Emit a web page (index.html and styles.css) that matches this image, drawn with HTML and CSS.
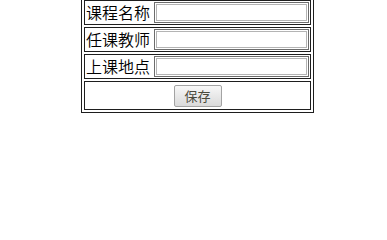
FILE: index.html
```html
<!DOCTYPE html>
<html lang="zh-CN">
<head>
<meta charset="utf-8">
<title>课程</title>
<link rel="stylesheet" href="styles.css">
</head>
<body>
<table class="form">
  <tr><td><div class="row"><span class="label">课程名称</span><input class="field" type="text"></div></td></tr>
  <tr><td><div class="row"><span class="label">任课教师</span><input class="field" type="text"></div></td></tr>
  <tr><td><div class="row"><span class="label">上课地点</span><input class="field" type="text"></div></td></tr>
  <tr><td class="actions"><button class="save" type="button">保存</button></td></tr>
</table>
</body>
</html>
```

FILE: styles.css
```css
body {
  margin: 0;
  background: #fff;
  font-family: "Noto Sans CJK SC", "Noto Sans", sans-serif;
}
.form {
  margin: -3px 0 0 81px;
  border: 1px solid #1e1e1e;
  border-spacing: 2px;
}
.form td {
  border: 1px solid #1e1e1e;
  padding: 1px;
}
.row {
  display: flex;
  align-items: center;
  gap: 4px;
  height: 21px;
}
.label {
  font-size: 16px;
  font-weight: 350;
  line-height: 21px;
  color: #000;
  white-space: nowrap;
}
.field {
  box-sizing: border-box;
  width: 155px;
  height: 21px;
  margin: 0;
  padding: 0;
  border: 1px solid #6c6c6c;
  box-shadow: inset 0 0 0 1px #fff, inset 0 0 0 2px #b4b4b4;
  background: #fff;
}
.actions {
  text-align: center;
}
.form td.actions {
  padding: 3px 1px 0;
  height: 22px;
}
.save {
  box-sizing: border-box;
  width: 48px;
  height: 22px;
  margin: 0;
  padding: 0;
  border: 1px solid #a3a3a3;
  border-radius: 2px;
  background: linear-gradient(#f7f7f7, #dadada);
  font-family: "Noto Sans CJK SC", sans-serif;
  font-size: 13px;
  line-height: 20px;
  color: #4a4a3c;
  vertical-align: top;
}
```
